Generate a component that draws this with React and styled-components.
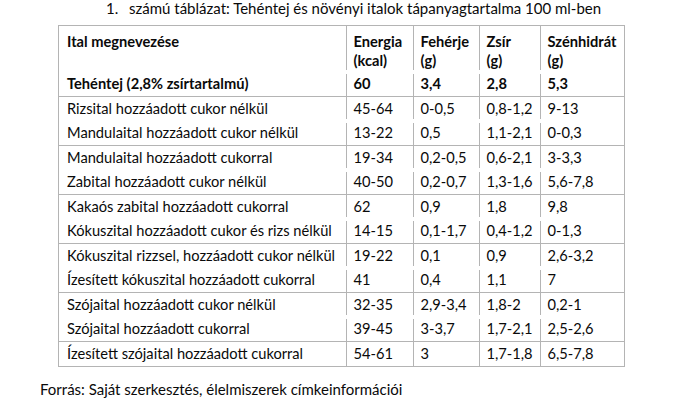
import React from 'react';
import styled, { createGlobalStyle, css } from 'styled-components';

const LINE = '#b4b4b4';

const GlobalStyle = createGlobalStyle`
  html, body {
    margin: 0;
    padding: 0;
    background: #ffffff;
  }
  body {
    font-family: Lato, "Open Sans", sans-serif;
    color: #0a0a0a;
  }
`;

const Page = styled.div`
  width: 676px;
  height: 400px;
  overflow: hidden;
  display: flex;
  flex-direction: column;
  font-size: 14.67px;
`;

const Caption = styled.div`
  display: flex;
  height: 19px;
  line-height: 19px;
  padding-left: 106px;
  margin-top: -1px;
  font-size: 15px;
`;

const CaptionNumber = styled.span`
  width: 23px;
`;

const Table = styled.table`
  border-collapse: collapse;
  margin: 7px 0 0 58px;
  width: 566px;
  table-layout: fixed;
`;

const Col = styled.col`
  width: ${(p) => p.$w}px;
`;

// inner column separators are drawn as a 1px strip at the cell's left edge,
// cut short at the top or bottom the way the source PDF renders them
const separator = css`
  ${(p) =>
    p.$inner &&
    css`
      background-image: linear-gradient(${LINE}, ${LINE});
      background-repeat: no-repeat;
      background-size: 1px calc(100% - ${p.$cut || 0}px);
      background-position: left ${p.$cutTop ? 'bottom' : 'top'};
    `}
`;

const edges = css`
  border-left: ${(p) => (p.$inner ? '0' : `1px solid ${LINE}`)};
  border-right: ${(p) => (p.$last ? `1px solid ${LINE}` : '0')};
`;

const HeadCell = styled.th`
  font-weight: 700;
  text-align: left;
  vertical-align: top;
  padding: 6px 0 2px 8px;
  line-height: 19px;
  height: 38px;
  border-top: 1px solid ${LINE};
  ${edges}
  ${separator}
`;

const BaseCell = styled.td`
  font-weight: 700;
  padding: 0 0 0 8px;
  line-height: 24px;
  height: 24px;
  border-bottom: 1px solid ${LINE};
  ${edges}
  ${separator}
`;

const Cell = styled.td`
  padding: 0 0 0 8px;
  line-height: 24px;
  height: 24px;
  white-space: nowrap;
  border-bottom: ${(p) => (p.$ruled ? `1px solid ${LINE}` : '0')};
  ${edges}
  ${separator}
`;

const Source = styled.div`
  margin-top: 12px;
  padding-left: 40px;
  line-height: 20px;
  font-size: 15px;
`;

const rows = [
  ['Rizsital hozzáadott cukor nélkül', '45-64', '0-0,5', '0,8-1,2', '9-13'],
  ['Mandulaital hozzáadott cukor nélkül', '13-22', '0,5', '1,1-2,1', '0-0,3'],
  ['Mandulaital hozzáadott cukorral', '19-34', '0,2-0,5', '0,6-2,1', '3-3,3'],
  ['Zabital hozzáadott cukor nélkül', '40-50', '0,2-0,7', '1,3-1,6', '5,6-7,8'],
  ['Kakaós zabital hozzáadott cukorral', '62', '0,9', '1,8', '9,8'],
  ['Kókuszital hozzáadott cukor és rizs nélkül', '14-15', '0,1-1,7', '0,4-1,2', '0-1,3'],
  ['Kókuszital rizzsel, hozzáadott cukor nélkül', '19-22', '0,1', '0,9', '2,6-3,2'],
  ['Ízesített kókuszital hozzáadott cukorral', '41', '0,4', '1,1', '7'],
  ['Szójaital hozzáadott cukor nélkül', '32-35', '2,9-3,4', '1,8-2', '0,2-1'],
  ['Szójaital hozzáadott cukorral', '39-45', '3-3,7', '1,7-2,1', '2,5-2,6'],
  ['Ízesített szójaital hozzáadott cukorral', '54-61', '3', '1,7-1,8', '6,5-7,8'],
];

const head = ['Ital megnevezése', 'Energia|(kcal)', 'Fehérje|(g)', 'Zsír|(g)', 'Szénhidrát|(g)'];
const base = ['Tehéntej (2,8% zsírtartalmú)', '60', '3,4', '2,8', '5,3'];
const widths = [287, 67, 66, 61, 85];

export default function App() {
  const last = widths.length - 1;
  return (
    <Page>
      <GlobalStyle />
      <Caption>
        <CaptionNumber>1.</CaptionNumber>
        <span>számú táblázat: Tehéntej és növényi italok tápanyagtartalma 100 ml-ben</span>
      </Caption>
      <Table>
        <colgroup>
          {widths.map((w, i) => (
            <Col key={i} $w={w} />
          ))}
        </colgroup>
        <thead>
          <tr>
            {head.map((h, j) => (
              <HeadCell key={j} $inner={j > 0} $last={j === last} $cut={2}>
                {h.split('|').map((part, k) => (
                  <React.Fragment key={k}>
                    {k > 0 && <br />}
                    {part}
                  </React.Fragment>
                ))}
              </HeadCell>
            ))}
          </tr>
          <tr>
            {base.map((v, j) => (
              <BaseCell key={j} $inner={j > 0} $last={j === last} $cut={2} $cutTop>
                {v}
              </BaseCell>
            ))}
          </tr>
        </thead>
        <tbody>
          {rows.map((r, i) => {
            const first = i % 2 === 0 && i !== rows.length - 1;
            const second = i % 2 === 1;
            return (
              <tr key={i}>
                {r.map((v, j) => (
                  <Cell
                    key={j}
                    $inner={j > 0}
                    $last={j === last}
                    $ruled={!first}
                    $cut={first || second ? 2 : 0}
                    $cutTop={second}
                  >
                    {v}
                  </Cell>
                ))}
              </tr>
            );
          })}
        </tbody>
      </Table>
      <Source>Forrás: Saját szerkesztés, élelmiszerek címkeinformációi</Source>
    </Page>
  );
}
